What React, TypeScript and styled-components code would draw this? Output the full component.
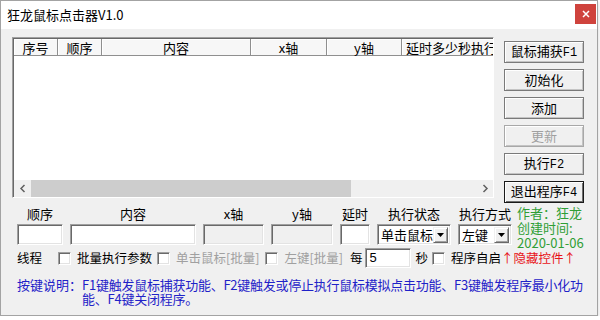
import React from 'react';
import styled, { createGlobalStyle } from 'styled-components';

const FONT = `"Noto Sans CJK SC", "Noto Sans", sans-serif`;

const Global = createGlobalStyle`
  html, body { margin: 0; padding: 0; background: #ffffff; }
  body { font-family: ${FONT}; font-size: 13px; color: #000; }
  * { box-sizing: border-box; }
`;

const Window = styled.div`
  width: 598px;
  height: 316px;
  border: 1px solid #a3a3a3;
  background: #f0f0f0;
  display: flex;
  flex-direction: column;
  box-shadow: 0 2px 4px rgba(0, 0, 0, 0.18);
`;

const TitleBar = styled.div`
  height: 28px;
  flex: none;
  background: #fff;
  display: flex;
  align-items: flex-start;
  justify-content: space-between;
  padding: 0 1px 0 6px;
`;

const Title = styled.div`
  font-size: 13px;
  line-height: 28px;
  color: #000;
`;

const CloseBtn = styled.div`
  margin-top: 3px;
  width: 21px;
  height: 20px;
  background: #cf433d;
  display: flex;
  align-items: center;
  justify-content: center;
`;

const Client = styled.div`
  flex: 1;
  padding: 8px 0 0 11px;
  display: flex;
  flex-direction: column;
`;

const TopArea = styled.div`
  display: flex;
  align-items: flex-start;
  gap: 10px;
`;

const ListView = styled.div`
  width: 482px;
  height: 161px;
  background: #fff;
  border: 1px solid;
  border-color: #a0a0a0 #fff #fff #a0a0a0;
  box-shadow: inset 1px 1px #696969;
  padding: 1px 0 0 1px;
  display: flex;
  flex-direction: column;
  overflow: hidden;
`;

const HeaderRow = styled.div`
  display: flex;
  height: 17px;
  flex: none;
  overflow: hidden;
`;

const HeaderCell = styled.div<{ $w: number }>`
  flex: none;
  width: ${(p) => p.$w}px;
  height: 17px;
  line-height: 17px;
  text-align: center;
  white-space: nowrap;
  color: #000;
  background: #f7f7f7;
  border-right: 1px solid #8f8f8f;
  border-bottom: 1px solid #8f8f8f;
  box-shadow: inset 1px 1px #fff;
`;

const ListBody = styled.div`
  flex: 1;
  background: #fff;
`;

const HScroll = styled.div`
  height: 17px;
  flex: none;
  display: flex;
  background: #f0f0f0;
`;

const ScrollArrow = styled.div`
  width: 17px;
  height: 17px;
  flex: none;
  display: flex;
  align-items: center;
  justify-content: center;
  background: #f0f0f0;
`;

const Thumb = styled.div`
  width: 320px;
  height: 17px;
  flex: none;
  background: #cdcdcd;
`;

const Track = styled.div`
  flex: 1;
`;

const ButtonCol = styled.div`
  display: flex;
  flex-direction: column;
  gap: 6px;
  padding-top: 4px;
`;

const Button = styled.div<{ $disabled?: boolean; $default?: boolean }>`
  width: 80px;
  height: 22px;
  display: flex;
  align-items: center;
  justify-content: center;
  font-size: 13px;
  background: #f0f0f0;
  color: ${(p) => (p.$disabled ? '#a0a0a0' : '#000')};
  border: 1px solid ${(p) => (p.$default ? '#1a1a1a' : p.$disabled ? '#a8a8a8' : '#7a7a7a')};
  box-shadow: ${(p) =>
    p.$default
      ? 'inset 1px 1px #fff, inset -1px -1px #6f6f6f'
      : 'inset 1px 1px #fff, inset -1px -1px #c4c4c4'};
`;

const ButtonLabel = styled.span`
  line-height: 18px;
  white-space: nowrap;
`;

const FormGrid = styled.div`
  margin-top: 3px;
  margin-left: 5px;
  display: grid;
  grid-template-columns: 46px 126px 61px 62px 30px 74px 54px 70px;
  grid-template-rows: 16px 21px;
  column-gap: 7px;
  row-gap: 2px;
`;

const FieldLabel = styled.div`
  text-align: center;
  line-height: 16px;
  white-space: nowrap;
`;

const TextBox = styled.div<{ $disabled?: boolean; $w?: number; $h?: number; $ml?: number }>`
  width: ${(p) => (p.$w ? `${p.$w}px` : '100%')};
  height: ${(p) => (p.$h ? `${p.$h}px` : '21px')};
  margin-left: ${(p) => p.$ml ?? 0}px;
  background: ${(p) => (p.$disabled ? '#f0f0f0' : '#fff')};
  border: 1px solid;
  border-color: #a0a0a0 #fff #fff #a0a0a0;
  box-shadow: inset 1px 1px #696969, inset -1px -1px #e3e3e3;
  padding: 0 3px;
  line-height: 17px;
  font-size: 13px;
  font-family: "Liberation Sans", sans-serif;
`;

const Combo = styled.div`
  width: 100%;
  height: 21px;
  background: #fff;
  border: 1px solid;
  border-color: #a0a0a0 #fff #fff #a0a0a0;
  box-shadow: inset 1px 1px #696969, inset -1px -1px #e3e3e3;
  display: flex;
  align-items: center;
  padding: 2px 2px 2px 3px;
`;

const ComboText = styled.div`
  flex: 1;
  line-height: 17px;
  white-space: nowrap;
  overflow: hidden;
`;

const ComboArrow = styled.div`
  width: 15px;
  height: 16px;
  flex: none;
  background: #f0f0f0;
  border: 1px solid;
  border-color: #f0f0f0 #696969 #696969 #f0f0f0;
  box-shadow: inset 1px 1px #fff, inset -1px -1px #a0a0a0;
  display: flex;
  align-items: center;
  justify-content: center;
`;

const Author = styled.div`
  grid-column: 8;
  grid-row: 1 / span 2;
  color: #2f9e35;
  line-height: 15px;
  margin-top: -1px;
  margin-left: -2px;
  white-space: nowrap;
`;

const Mono = styled.span`
  font-family: "Liberation Mono", monospace;
  font-size: 12px;
`;

const OptionRow = styled.div`
  margin-top: 3px;
  margin-left: 5px;
  height: 20px;
  display: flex;
  align-items: center;
  white-space: nowrap;
  font-size: 12.5px;
`;

const Text = styled.span<{ $ml?: number; $mr?: number; $color?: string }>`
  margin-left: ${(p) => p.$ml ?? 0}px;
  margin-right: ${(p) => p.$mr ?? 0}px;
  color: ${(p) => p.$color ?? '#000'};
  line-height: 16px;
`;

const CheckItem = styled.label<{ $ml?: number }>`
  display: flex;
  align-items: center;
  gap: 6px;
  margin-left: ${(p) => p.$ml ?? 0}px;
`;

const CheckBox = styled.span`
  width: 13px;
  height: 13px;
  flex: none;
  background: #fff;
  border: 1px solid;
  border-color: #a0a0a0 #fff #fff #a0a0a0;
  box-shadow: inset 1px 1px #696969, inset -1px -1px #e3e3e3;
`;

const Help = styled.div`
  margin-top: 10px;
  margin-left: 5px;
  display: flex;
  color: #1f22c8;
  line-height: 14px;
`;

const HelpLabel = styled.div`
  flex: none;
  white-space: nowrap;
`;

const HelpText = styled.div`
  white-space: nowrap;
  letter-spacing: -0.25px;
`;

const ChevronLeft = () => (
  <svg width="8" height="9" viewBox="0 0 8 9">
    <path d="M5.5 1 L2 4.5 L5.5 8" fill="none" stroke="#606060" strokeWidth="1.5" />
  </svg>
);

const ChevronRight = () => (
  <svg width="8" height="9" viewBox="0 0 8 9">
    <path d="M2.5 1 L6 4.5 L2.5 8" fill="none" stroke="#606060" strokeWidth="1.5" />
  </svg>
);

const DownTri = () => (
  <svg width="7" height="4" viewBox="0 0 7 4">
    <path d="M0 0 H7 L3.5 4 Z" fill="#000" />
  </svg>
);

const CloseX = () => (
  <svg width="8" height="8" viewBox="0 0 8 8">
    <path d="M1 1 L7 7 M7 1 L1 7" stroke="#fff" strokeWidth="1.5" />
  </svg>
);

const columns: [string, number][] = [
  ['序号', 44],
  ['顺序', 44],
  ['内容', 149],
  ['x轴', 76],
  ['y轴', 75],
  ['延时多少秒执行', 100],
];

export default function App() {
  return (
    <>
      <Global />
      <Window>
        <TitleBar>
          <Title>狂龙鼠标点击器V1.0</Title>
          <CloseBtn>
            <CloseX />
          </CloseBtn>
        </TitleBar>
        <Client>
          <TopArea>
            <ListView>
              <HeaderRow>
                {columns.map(([t, w]) => (
                  <HeaderCell key={t} $w={w}>
                    {t}
                  </HeaderCell>
                ))}
              </HeaderRow>
              <ListBody />
              <HScroll>
                <ScrollArrow>
                  <ChevronLeft />
                </ScrollArrow>
                <Thumb />
                <Track />
                <ScrollArrow>
                  <ChevronRight />
                </ScrollArrow>
              </HScroll>
            </ListView>
            <ButtonCol>
              <Button><ButtonLabel>鼠标捕获<Mono>F1</Mono></ButtonLabel></Button>
              <Button><ButtonLabel>初始化</ButtonLabel></Button>
              <Button><ButtonLabel>添加</ButtonLabel></Button>
              <Button $disabled><ButtonLabel>更新</ButtonLabel></Button>
              <Button><ButtonLabel>执行<Mono>F2</Mono></ButtonLabel></Button>
              <Button $default><ButtonLabel>退出程序<Mono>F4</Mono></ButtonLabel></Button>
            </ButtonCol>
          </TopArea>

          <FormGrid>
            <FieldLabel>顺序</FieldLabel>
            <FieldLabel>内容</FieldLabel>
            <FieldLabel>x轴</FieldLabel>
            <FieldLabel>y轴</FieldLabel>
            <FieldLabel>延时</FieldLabel>
            <FieldLabel>执行状态</FieldLabel>
            <FieldLabel>执行方式</FieldLabel>
            <Author>
              作者：狂龙
              <br />
              创建时间:
              <br />
              2020-01-06
            </Author>
            <TextBox />
            <TextBox />
            <TextBox $disabled />
            <TextBox $disabled />
            <TextBox />
            <Combo>
              <ComboText>单击鼠标</ComboText>
              <ComboArrow>
                <DownTri />
              </ComboArrow>
            </Combo>
            <Combo>
              <ComboText>左键</ComboText>
              <ComboArrow>
                <DownTri />
              </ComboArrow>
            </Combo>
          </FormGrid>

          <OptionRow>
            <Text $mr={16}>线程</Text>
            <CheckItem>
              <CheckBox />
              <Text>批量执行参数</Text>
            </CheckItem>
            <CheckItem $ml={5}>
              <CheckBox />
              <Text $color="#a0a0a0">单击鼠标[批量]</Text>
            </CheckItem>
            <CheckItem $ml={6}>
              <CheckBox />
              <Text $color="#a0a0a0">左键[批量]</Text>
            </CheckItem>
            <Text $ml={7}>每</Text>
            <TextBox $w={46} $h={20} $ml={3}>5</TextBox>
            <Text $ml={4}>秒</Text>
            <CheckItem $ml={4}>
              <CheckBox />
              <Text>程序自启</Text>
            </CheckItem>
            <Text $color="#e8141a">↑隐藏控件↑</Text>
          </OptionRow>

          <Help>
            <HelpLabel>按键说明：</HelpLabel>
            <HelpText>
              F1键触发鼠标捕获功能、F2键触发或停止执行鼠标模拟点击功能、F3键触发程序最小化功
              <br />
              能、F4键关闭程序。
            </HelpText>
          </Help>
        </Client>
      </Window>
    </>
  );
}
